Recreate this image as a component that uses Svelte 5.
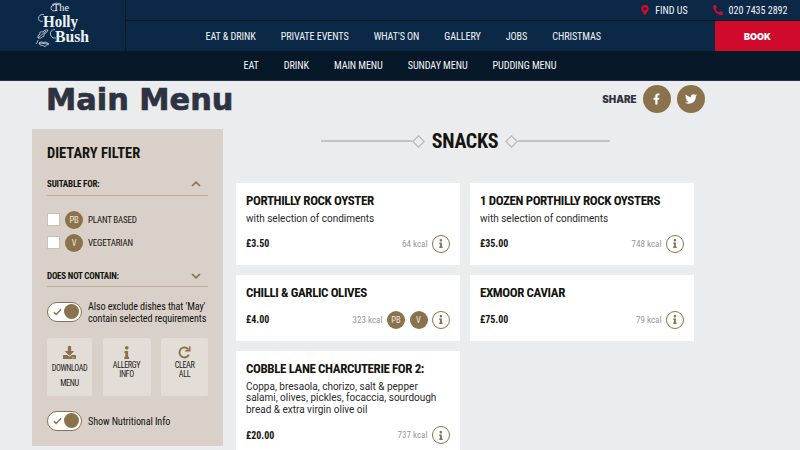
<script>
  const nav = ['EAT & DRINK', 'PRIVATE EVENTS', "WHAT'S ON", 'GALLERY', 'JOBS', 'CHRISTMAS'];
  const subnav = ['EAT', 'DRINK', 'MAIN MENU', 'SUNDAY MENU', 'PUDDING MENU'];
  const diets = [
    { code: 'PB', label: 'PLANT BASED' },
    { code: 'V', label: 'VEGETARIAN' }
  ];
  const columns = [
    [
      { name: 'PORTHILLY ROCK OYSTER', desc: ['with selection of condiments'], price: '£3.50', kcal: 64, tags: [] },
      { name: 'CHILLI & GARLIC OLIVES', desc: [], price: '£4.00', kcal: 323, tags: ['PB', 'V'] },
      {
        name: 'COBBLE LANE CHARCUTERIE FOR 2:',
        desc: ['Coppa, bresaola, chorizo, salt & pepper', 'salami, olives, pickles, focaccia, sourdough', 'bread & extra virgin olive oil'],
        price: '£20.00', kcal: 737, tags: []
      }
    ],
    [
      { name: '1 DOZEN PORTHILLY ROCK OYSTERS', desc: ['with selection of condiments'], price: '£35.00', kcal: 748, tags: [] },
      { name: 'EXMOOR CAVIAR', desc: [], price: '£75.00', kcal: 79, tags: [] }
    ]
  ];
</script>

{#snippet infoGlyph(h)}
  <svg width={h * 0.42} height={h} viewBox="0 0 192 512" fill="currentColor"><path d="M20 424.229h20V279.771H20c-11.046 0-20-8.954-20-20V212c0-11.046 8.954-20 20-20h112c11.046 0 20 8.954 20 20v212.229h20c11.046 0 20 8.954 20 20V492c0 11.046-8.954 20-20 20H20c-11.046 0-20-8.954-20-20v-47.771c0-11.046 8.954-20 20-20zM96 0C56.235 0 24 32.235 24 72s32.235 72 72 72 72-32.235 72-72S135.764 0 96 0z"/></svg>
{/snippet}

{#snippet toggle()}
  <div class="toggle">
    <svg width="9" height="8" viewBox="0 0 9 8"><path d="M.8 4.200 3.100 6.400 8.100 1.200" fill="none" stroke="#8a734c" stroke-width="1.500"/></svg>
    <i></i>
  </div>
{/snippet}

<div class="page">
  <header>
    <div class="logo">
      <svg width="60" height="50" viewBox="0 0 60 50" fill="#eef1f4">
        <g font-family="'Liberation Serif', serif">
          <text x="18" y="11" font-size="10" textLength="16" lengthAdjust="spacingAndGlyphs">The</text>
          <text x="8" y="27" font-size="16" font-weight="bold" textLength="35" lengthAdjust="spacingAndGlyphs">Holly</text>
          <text x="20" y="42" font-size="16" font-weight="bold" textLength="34" lengthAdjust="spacingAndGlyphs">Bush</text>
        </g>
        <g fill="none" stroke="#eef1f4" stroke-width=".7">
          <path d="M19 5.500Q15.500 5 16 8.500Q17 12 21 10.500M26 4Q21 2 17 4.500"/>
          <path d="M9 14.500Q3.500 14 3.500 18.500Q4 22.500 8 21M20 29.500Q14.500 30 15.500 35Q17.500 39.500 21 38"/>
          <path d="M3 38Q2 35 5 34Q4 31 8 32Q9 29 13 30Q12 33 9 34Q10 37 7 37Q6 39 3 38L11 31"/>
          <path d="M1 44Q3 42 3 40M4 43Q6 41 8 42.500Q11 41 14 44Q11 45 10 46.500Q7 45 5 45ZL13 44"/>
        </g>
      </svg>
    </div>
    <div class="bars">
      <div class="contact">
        <svg width="8" height="10" viewBox="0 0 384 512" fill="#d20a2c"><path d="M172 502C27 291 0 269 0 192a192 192 0 1 1 384 0c0 77-27 99-172 310a24 24 0 0 1-40 0zM192 272a80 80 0 1 0 0-160 80 80 0 0 0 0 160z"/></svg>
        <span class="find">FIND US</span>
        <svg width="10" height="10" viewBox="0 0 512 512" fill="#d20a2c"><path d="M493.400 24.600l-104-24c-11.300-2.600-22.900 3.300-27.500 13.900l-48 112c-4.200 9.800-1.400 21.300 6.900 28l60.600 49.600c-36 76.700-98.900 140.500-177.200 177.200l-49.600-60.600c-6.800-8.300-18.200-11.100-28-6.900l-112 48C3.900 366.500-2 378.100.600 389.400l24 104C27.100 504.200 36.700 512 48 512c256.100 0 464-207.500 464-464 0-11.200-7.700-20.900-18.600-23.400z" transform="matrix(-1 0 0 1 512 0)"/></svg>
        <span>020 7435 2892</span>
      </div>
      <div class="mainbar">
        <nav>{#each nav as n}<span>{n}</span>{/each}</nav>
        <div class="book">BOOK</div>
      </div>
    </div>
  </header>
  <nav class="sub">{#each subnav as n}<span>{n}</span>{/each}</nav>

  <div class="heading">
    <h1>Main Menu</h1>
    <div class="share">
      <span>SHARE</span>
      <b><svg width="7" height="12" viewBox="0 0 320 512" fill="#fff"><path d="M279 288l14-93h-89v-60c0-25 12-50 52-50h41V7S260 0 225 0c-73 0-121 44-121 125v70H23v93h81v224h100V288z"/></svg></b>
      <b><svg width="12" height="12" viewBox="0 0 512 512" fill="#fff"><path d="M459.400 151.700c.300 4.500.300 9.100.300 13.600 0 138.700-105.600 298.600-298.600 298.600-59.500 0-114.700-17.200-161.100-47.100 8.400 1 16.600 1.300 25.300 1.300 49.100 0 94.200-16.600 130.300-44.800-46.100-1-84.800-31.200-98.100-72.800 6.500 1 13 1.600 19.800 1.600 9.400 0 18.800-1.300 27.600-3.600-48.100-9.700-84.100-52-84.100-103v-1.300c14 7.800 30.200 12.700 47.400 13.300-28.300-18.800-46.800-51-46.800-87.400 0-19.500 5.200-37.400 14.300-53 51.700 63.700 129.300 105.300 216.400 109.800-1.600-7.800-2.600-15.900-2.600-24 0-57.800 46.800-104.900 104.900-104.900 30.200 0 57.500 12.700 76.700 33.100 23.700-4.500 46.500-13.300 66.600-25.300-7.800 24.400-24.400 44.800-46.100 57.800 21.100-2.300 41.600-8.100 60.400-16.200-14.300 20.800-32.200 39.300-52.600 54.300z"/></svg></b>
    </div>
  </div>

  <main>
    <aside>
      <h2>DIETARY FILTER</h2>
      <div class="fold">SUITABLE FOR:<svg width="10" height="6" viewBox="0 0 10 6"><path d="M1 5 5 1.200 9 5" fill="none" stroke="#8a734c" stroke-width="1.700"/></svg></div>
      <div class="diets">
        {#each diets as d}
          <div class="diet"><span class="box"></span><span class="tag">{d.code}</span><span>{d.label}</span></div>
        {/each}
      </div>
      <div class="fold">DOES NOT CONTAIN:<svg width="10" height="6" viewBox="0 0 10 6"><path d="M1 1 5 4.800 9 1" fill="none" stroke="#8a734c" stroke-width="1.700"/></svg></div>
      <div class="switch first">{@render toggle()}<span>Also exclude dishes that 'May'<br>contain selected requirements</span></div>
      <div class="actions">
        <div class="dl">
          <svg width="13" height="13" viewBox="0 0 512 512" fill="currentColor"><path d="M216 0h80c13 0 24 11 24 24v168h88c18 0 27 22 14 34L270 378c-8 8-20 8-28 0L90 226c-13-12-4-34 14-34h88V24c0-13 11-24 24-24zm296 376v112c0 13-11 24-24 24H24c-13 0-24-11-24-24V376c0-13 11-24 24-24h147l49 49c20 20 52 20 72 0l49-49h147c13 0 24 11 24 24zM388 464a20 20 0 1 0-40 0 20 20 0 0 0 40 0zm64 0a20 20 0 1 0-40 0 20 20 0 0 0 40 0z"/></svg>
          <span>DOWNLOAD<br>MENU</span>
        </div>
        <div class="al">{@render infoGlyph(13)}<span>ALLERGY<br>INFO</span></div>
        <div class="cl">
          <svg width="13" height="13" viewBox="0 0 13 13"><path d="M10.900 8.700A5 5 0 1 1 10.500 3.500" fill="none" stroke="currentColor" stroke-width="1.900"/><path d="M12.500.200v5.300H7.200V4.100l3-.1.900-.9V.200z" fill="currentColor"/></svg>
          <span>CLEAR<br>ALL</span>
        </div>
      </div>
      <div class="switch">{@render toggle()}<span>Show Nutritional Info</span></div>
    </aside>

    <section>
      <div class="divider">
        <i></i><svg width="13" height="13" viewBox="0 0 13 13"><path d="M6.500.800 12.200 6.500 6.500 12.200.800 6.500Z" fill="none" stroke="#b9babb" stroke-width="1.300"/></svg>
        <h2>SNACKS</h2>
        <svg width="13" height="13" viewBox="0 0 13 13"><path d="M6.500.800 12.200 6.500 6.500 12.200.800 6.500Z" fill="none" stroke="#b9babb" stroke-width="1.300"/></svg><i></i>
      </div>
      <div class="cards">
        {#each columns as col}
          <div class="col">
            {#each col as c}
              <article>
                <h3>{c.name}</h3>
                {#if c.desc.length}<p>{#each c.desc as line}<span>{line}</span>{/each}</p>{/if}
                <div class="foot">
                  <strong>{c.price}</strong>
                  <span class="kcal">{c.kcal} kcal</span>
                  {#each c.tags as t}<span class="tag">{t}</span>{/each}
                  <span class="info">{@render infoGlyph(9)}</span>
                </div>
              </article>
            {/each}
          </div>
        {/each}
      </div>
    </section>
  </main>
</div>

<style>
  :global(body) { margin: 0; overflow: hidden; }
  * { box-sizing: border-box; }
  h1, h2, h3, p { margin: 0; }
  svg { display: block; flex: none; }
  .page { width: 800px; height: 450px; overflow: hidden; background: #ebeced; color: #15150f; font-family: 'Roboto Condensed', Roboto, sans-serif; font-stretch: 75%; font-size: 10px; white-space: nowrap; }
  header { display: flex; height: 51px; background: #0c2847; color: #f2f4f6; }
  .logo { width: 126px; border-right: 1px solid #10161c; padding-left: 35px; }
  .bars { flex: 1; }
  .contact { height: 21px; border-bottom: 1px solid #10161c; display: flex; align-items: center; justify-content: flex-end; padding-right: 12.500px; font-size: 10px; }
  .contact svg { margin-right: 6px; }
  .contact .find { margin-right: 25px; }
  .mainbar { display: flex; height: 30px; }
  nav { display: flex; align-items: center; gap: 25px; font-size: 10.200px; letter-spacing: -.1px; }
  .mainbar nav { flex: 1; padding-left: 79.500px; }
  .book { width: 85px; background: #d00a2b; color: #fff; display: flex; align-items: center; justify-content: center; font: 900 9px Inter, sans-serif; }
  .sub { height: 30px; padding-left: 243.500px; background: #071828; color: #f2f4f6; border-bottom: 1px solid #2b3148; }
  .heading { height: 48px; display: flex; justify-content: space-between; padding: 0 95.500px 0 45.500px; }
  h1 { font: bold 31px/36px 'DejaVu Sans', sans-serif; color: #2e3342; -webkit-text-stroke: .7px #2e3342; transform: scaleX(.98); transform-origin: 0 0; }
  .share { display: flex; align-items: center; height: 36px; gap: 6px; }
  .share span { font: 900 9.800px Inter, sans-serif; color: #2e3342; }
  .share b { width: 28px; height: 28px; border-radius: 50%; background: #8a734c; display: flex; align-items: center; justify-content: center; }
  main { display: flex; padding-left: 32px; gap: 13px; }
  aside { width: 191px; height: 317px; background: #d8d0c9; padding: 15px 15px 0; }
  aside h2 { font-size: 14.500px; line-height: 19px; font-weight: 700; }
  .fold { display: flex; justify-content: space-between; align-items: center; height: 22px; margin-top: 10.500px; padding-right: 7px; font-size: 9px; letter-spacing: -.2px; font-weight: 700; border-bottom: 1px solid #bfae95; }
  .diets { padding-top: 12.500px; height: 69.500px; }
  .diet { display: flex; align-items: center; height: 23.300px; font-size: 9px; letter-spacing: -.200px; }
  .box { width: 13px; height: 13px; background: #fff; border: 1px solid #cdbfae; margin-right: 5px; }
  .tag { width: 18px; height: 18px; border-radius: 50%; background: #8a734c; color: #eee8df; display: flex; align-items: center; justify-content: center; font-size: 8.500px; flex: none; }
  .diet .tag { margin-right: 5px; }
  .diets + .fold { margin-top: 0; }
  .switch { display: flex; align-items: center; gap: 6px; height: 24px; font-size: 10.200px; letter-spacing: -.12px; line-height: 11.600px; }
  .switch span { padding-top: 3px; }
  .first { margin-top: 12.500px; }
  .toggle { flex: none; width: 35px; height: 20px; border: 1px solid #8a734c; border-radius: 10px; background: #fff; display: flex; align-items: center; justify-content: space-between; padding: 0 2px 0 5px; }
  .toggle i { width: 15px; height: 15px; border-radius: 50%; background: #8a734c; }
  .actions { display: flex; justify-content: space-between; margin: 14px 0 13px; height: 58px; }
  .actions div { background: #e2ddd7; border-radius: 2px; display: flex; flex-direction: column; align-items: center; padding-top: 8px; text-align: center; font-size: 8.200px; letter-spacing: -.4px; line-height: 9px; color: #25231f; }
  .actions svg { color: #8a734c; margin-bottom: 2.500px; }
  .actions .dl { width: 45px; line-height: 15px; }
  .actions .al { width: 48px; }
  .actions .cl { width: 47px; }
  section { width: 458px; }
  .divider { display: flex; align-items: center; height: 24px; padding: 0 84.500px 0 84.500px; }
  .divider i { flex: 1; height: 2px; background: #c3c4c5; }
  .divider h2 { font-size: 20px; letter-spacing: -.3px; line-height: 24px; font-weight: 700; margin: 0 7px; }
  .cards { display: flex; gap: 10px; margin-top: 30px; }
  .col { width: 224px; display: flex; flex-direction: column; gap: 10px; }
  article { background: #fff; padding: 10px 10px 11px; }
  h3 { font-size: 13px; letter-spacing: -.4px; line-height: 15px; font-weight: 700; }
  p { font: 10px/11.600px Roboto, sans-serif; padding-top: 4.700px; color: #2a2a28; }
  p span { display: block; }
  .foot { display: flex; align-items: center; height: 20px; margin-top: 10px; }
  p + .foot { margin-top: 9.700px; }
  .foot strong { font-size: 10px; margin-right: auto; }
  .kcal { font-size: 9px; color: #969696; }
  .foot .tag { margin-left: 4.500px; }
  .info { width: 18px; height: 18px; border: 1.500px solid #8a734c; border-radius: 50%; color: #8a734c; display: flex; align-items: center; justify-content: center; margin-left: 4.500px; }
</style>
